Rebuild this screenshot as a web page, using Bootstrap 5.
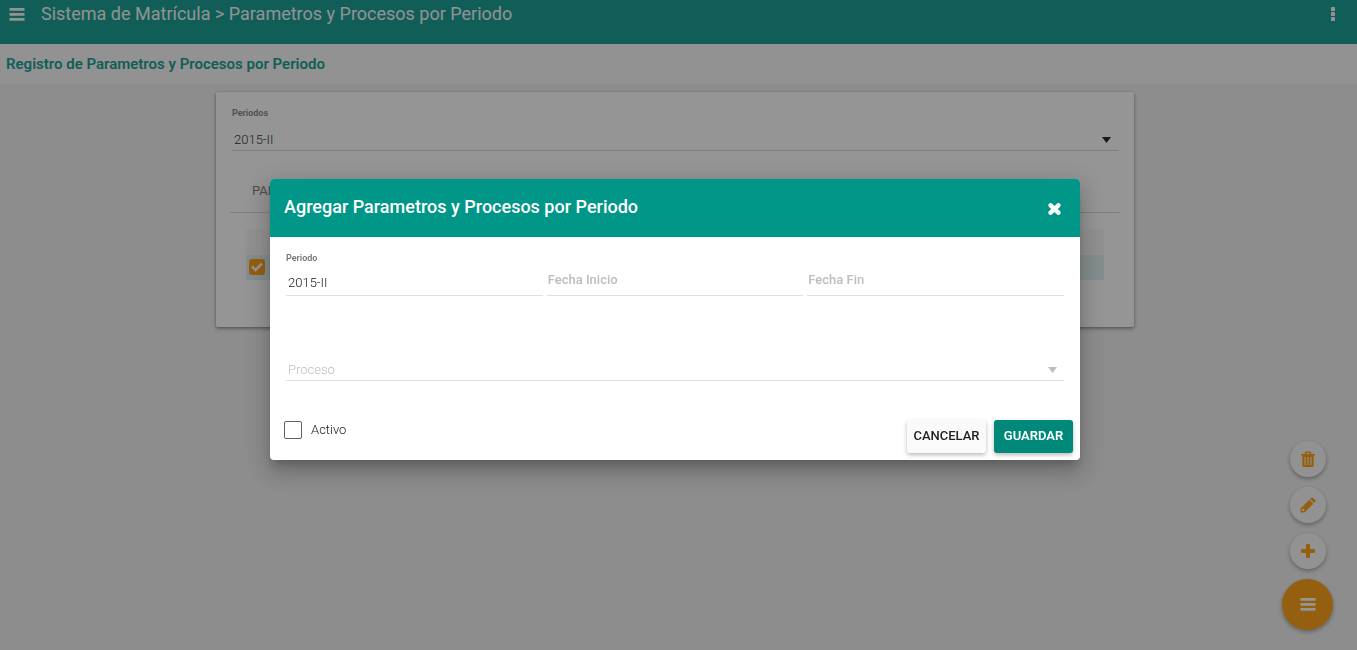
<!DOCTYPE html>
<html lang="es">
<head>
<meta charset="utf-8">
<meta name="viewport" content="width=device-width, initial-scale=1">
<title>Sistema de Matrícula</title>
<link href="https://cdn.jsdelivr.net/npm/bootstrap@5.3.0/dist/css/bootstrap.min.css" rel="stylesheet">
<style>
  :root { --teal: #009688; --orange: #ff9800; }
  body { font-family: Roboto, "Liberation Sans", sans-serif; font-size: 13px; line-height: 20px; background: #f0f0f0; color: #212121; min-height: 100vh; }
  .topbar { background: var(--teal); color: #fafafa; height: 44px; padding: 0 16px 16px 9px; }
  .topbar h1 { font-size: 18px; line-height: 28px; font-weight: 400; }
  .icon-btn { border: 0; background: none; color: inherit; padding: 0; display: flex; align-items: center; justify-content: center; }
  .subbar { background: #fafafa; height: 40px; padding: 0 6px; }
  .subbar h2 { font-size: 15px; line-height: 20px; font-weight: 600; color: var(--teal); }
  .page-area { padding: 8px 7px 0 0; }
  .panel { width: 68%; min-height: 235px; background: #fff; padding: 14px 14px 46px; border-radius: 2px; box-shadow: 0 1px 3px rgba(0,0,0,.3), 0 2px 4px rgba(0,0,0,.25); }
  .panel .field { margin: 0 2px; }
  .field label { display: block; font-size: 9px; line-height: 14px; font-weight: 600; color: #757575; }
  .line-input { display: block; width: 100%; border: 0; border-bottom: 1px solid #e0e0e0; border-radius: 0; background-color: transparent; color: #212121; font-size: 13px; line-height: 20px; height: 27px; padding: 3px 2px; font-weight: 300; appearance: none; opacity: 1; outline: 0; }
  .line-input.date { padding: 0 1px 6px; font-weight: 500; }
  .line-input::placeholder { color: #bdbdbd; opacity: 1; }
  .line-input:disabled { color: #bdbdbd; opacity: 1; }
  select.line-input { padding: 6px 2px 0; }
  .panel .line-input { border-color: #d5d5d5; height: 31px; padding: 10px 2px 0; }
  .arrow { position: absolute; right: 7px; bottom: 8px; width: 9px; height: 6px; pointer-events: none; }
  .tab-strip { border-bottom: 1px solid #d5d5d5; margin-top: 19px; padding: 10px 22px 11px; }
  .tab-strip button { color: #757575; line-height: 21px; }
  .grid-table { width: calc(100% - 32px); margin: 16px 16px 0; }
  .grid-table th { height: 26px; padding: 0; background: #f8f8f8; }
  .grid-table td { height: 25px; padding: 0 3px 2px; background: #e0f2f1; }
  .row-check { appearance: none; display: block; width: 16px; height: 16px; margin: 0; border-radius: 3px; background: #ff9800 url("data:image/svg+xml,%3Csvg xmlns='http://www.w3.org/2000/svg' viewBox='0 0 16 16'%3E%3Cpath d='M3 7.500l3.500 3.500 6.500-6.500' fill='none' stroke='%23fff' stroke-width='2.500'/%3E%3C/svg%3E"); }
  .fabs { right: 24px; bottom: 20px; gap: 10px; }
  .fab { width: 36px; height: 36px; border: 0; border-radius: 50%; background: #fafafa; color: var(--orange); padding: 0; display: flex; align-items: center; justify-content: center; box-shadow: 0 2px 4px rgba(0,0,0,.35); }
  .fab-main { width: 51px; height: 51px; background: var(--orange); color: #fff; }
  .scrim { background: rgba(33,33,33,.48); }
  .dialog-layer { display: flex; align-items: center; justify-content: center; padding: 0 7px 11px 0; }
  .dialog-box { width: 60%; background: #fff; border: 0; border-radius: 4px; box-shadow: 0 7px 8px -4px rgba(0,0,0,.2), 0 13px 19px 2px rgba(0,0,0,.14), 0 5px 24px 4px rgba(0,0,0,.12); }
  .dialog-head { background: var(--teal); color: #fff; height: 58px; padding: 0 19px 2px 14px; border-radius: 4px 4px 0 0; }
  .dialog-head h3 { font-size: 18px; line-height: 24px; font-weight: 500; }
  .dialog-main { padding: 14px 16px 0; }
  .fields { gap: 4px; }
  .proceso { margin-top: 58px; }
  .dialog-foot { padding: 39px 7px 7px 14px; }
  .activo { gap: 9px; height: 19px; }
  .tick { width: 18px; height: 18px; margin: 0; appearance: none; border: 1px solid #616161; border-radius: 2px; background: #fff; }
  .foot-btn { width: 79px; height: 33px; border: 0; border-radius: 3px; padding: 0 0 2px; font-size: 13px; line-height: 31px; font-weight: 500; background: #fafafa; color: #212121; box-shadow: 0 2px 4px rgba(0,0,0,.27); }
  .foot-btn.go { background: #00897b; color: #fff; font-weight: 600; }
</style>
</head>
<body>
<header class="topbar d-flex align-items-center justify-content-between">
  <div class="d-flex align-items-center gap-3">
    <button class="icon-btn" type="button" aria-label="Menú"><svg width="16" height="13" viewBox="0 0 16 13" fill="currentColor"><path d="M.5 0h15v2.800H.5zM.5 5h15v2.800H.5zM.5 10h15v2.800H.5z"/></svg></button>
    <h1 class="m-0">Sistema de Matrícula &gt; Parametros y Procesos por Periodo</h1>
  </div>
  <button class="icon-btn" type="button" aria-label="Opciones"><svg width="16" height="14" viewBox="0 0 16 14" fill="currentColor"><rect x="6" width="4" height="4" rx=".6"/><rect x="6" y="5" width="4" height="4" rx=".6"/><rect x="6" y="10" width="4" height="4" rx=".6"/></svg></button>
</header>
<div class="subbar d-flex align-items-center"><h2 class="m-0">Registro de Parametros y Procesos por Periodo</h2></div>

<main class="page-area">
  <section class="panel mx-auto">
    <div class="field position-relative">
      <label for="periodos">Periodos</label>
      <select id="periodos" class="line-input"><option>2015-II</option></select>
      <svg class="arrow" viewBox="0 0 9 6"><path d="M0 0h9L4.500 6z" fill="#111"/></svg>
    </div>
    <div class="tab-strip"><button class="icon-btn" type="button">PARAMETROS</button></div>
    <table class="grid-table" aria-label="Parametros">
      <thead><tr><th scope="col"></th></tr></thead>
      <tbody><tr><td><input class="row-check" type="checkbox" checked aria-label="Seleccionar fila"></td></tr></tbody>
    </table>
  </section>
</main>

<nav class="fabs position-fixed d-flex flex-column align-items-center" aria-label="Acciones">
  <button class="fab" type="button" aria-label="Eliminar"><svg width="14" height="16" viewBox="0 0 14 16"><path d="M4.500 3.500V2q0-.7.7-.7h3.600q.7 0 .7.700v1.500" fill="none" stroke="currentColor" stroke-width="1.400"/><path d="M0 3h14v1.500H0z" fill="currentColor"/><path fill-rule="evenodd" d="M1.300 4h11.400v10.500q0 1.500-1.500 1.500H2.800q-1.500 0-1.500-1.500zM3.500 6v8h1V6zM6.500 6v8h1V6zM9.500 6v8h1V6z" fill="currentColor"/></svg></button>
  <button class="fab" type="button" aria-label="Editar"><svg width="16" height="16" viewBox="0 0 16 16" fill="currentColor"><path fill-rule="evenodd" d="M.5 15.500V11.500L9.300 2.700l4 4-8.800 8.800zM2 12.500v1.500h1.500l1-1-1.500-1.500zM10.100 1.900l1-1q1-.9 2 0l2 2q.9 1 0 2l-1 1z"/></svg></button>
  <button class="fab" type="button" aria-label="Agregar"><svg width="14" height="14" viewBox="0 0 14 14" fill="currentColor"><path d="M5 1q0-1 1-1h2q1 0 1 1v4h4q1 0 1 1v2q0 1-1 1H9v4q0 1-1 1H6q-1 0-1-1V9H1q-1 0-1-1V6q0-1 1-1h4z"/></svg></button>
  <button class="fab fab-main" type="button" aria-label="Abrir acciones"><svg width="16" height="13" viewBox="0 0 16 13" fill="currentColor"><path d="M.5 0h15v2.800H.5zM.5 5h15v2.800H.5zM.5 10h15v2.800H.5z"/></svg></button>
</nav>

<div class="modal show scrim dialog-layer" role="dialog" aria-modal="true" aria-labelledby="dlg-title">
  <form class="dialog-box" onsubmit="return false">
    <div class="dialog-head d-flex align-items-center justify-content-between">
      <h3 id="dlg-title" class="m-0">Agregar Parametros y Procesos por Periodo</h3>
      <button class="icon-btn pt-1" type="button" aria-label="Cerrar"><svg width="13" height="12" viewBox="0 0 13 12"><path d="M2.600 2.300l7.800 7.400M10.400 2.300L2.600 9.700" stroke="currentColor" stroke-width="4.400" stroke-linecap="round"/></svg></button>
    </div>
    <div class="dialog-main">
      <div class="fields d-flex align-items-end">
        <div class="field flex-fill w-100">
          <label for="periodo">Periodo</label>
          <input id="periodo" class="line-input mt-1" type="text" value="2015-II" readonly>
        </div>
        <div class="flex-fill w-100"><input class="line-input date" type="text" placeholder="Fecha Inicio" aria-label="Fecha Inicio"></div>
        <div class="flex-fill w-100"><input class="line-input date" type="text" placeholder="Fecha Fin" aria-label="Fecha Fin"></div>
      </div>
      <div class="proceso position-relative">
        <select class="line-input" aria-label="Proceso" disabled><option>Proceso</option></select>
        <svg class="arrow" viewBox="0 0 9 6"><path d="M0 0h9L4.500 6z" fill="#bdbdbd"/></svg>
      </div>
    </div>
    <div class="dialog-foot d-flex align-items-start justify-content-between">
      <div class="activo d-flex align-items-center"><input id="activo" class="tick" type="checkbox"><label for="activo" class="fw-light">Activo</label></div>
      <div class="d-flex gap-2"><button class="foot-btn" type="button">CANCELAR</button><button class="foot-btn go" type="submit">GUARDAR</button></div>
    </div>
  </form>
</div>
<script src="https://cdn.jsdelivr.net/npm/bootstrap@5.3.0/dist/js/bootstrap.bundle.min.js"></script>
</body>
</html>
